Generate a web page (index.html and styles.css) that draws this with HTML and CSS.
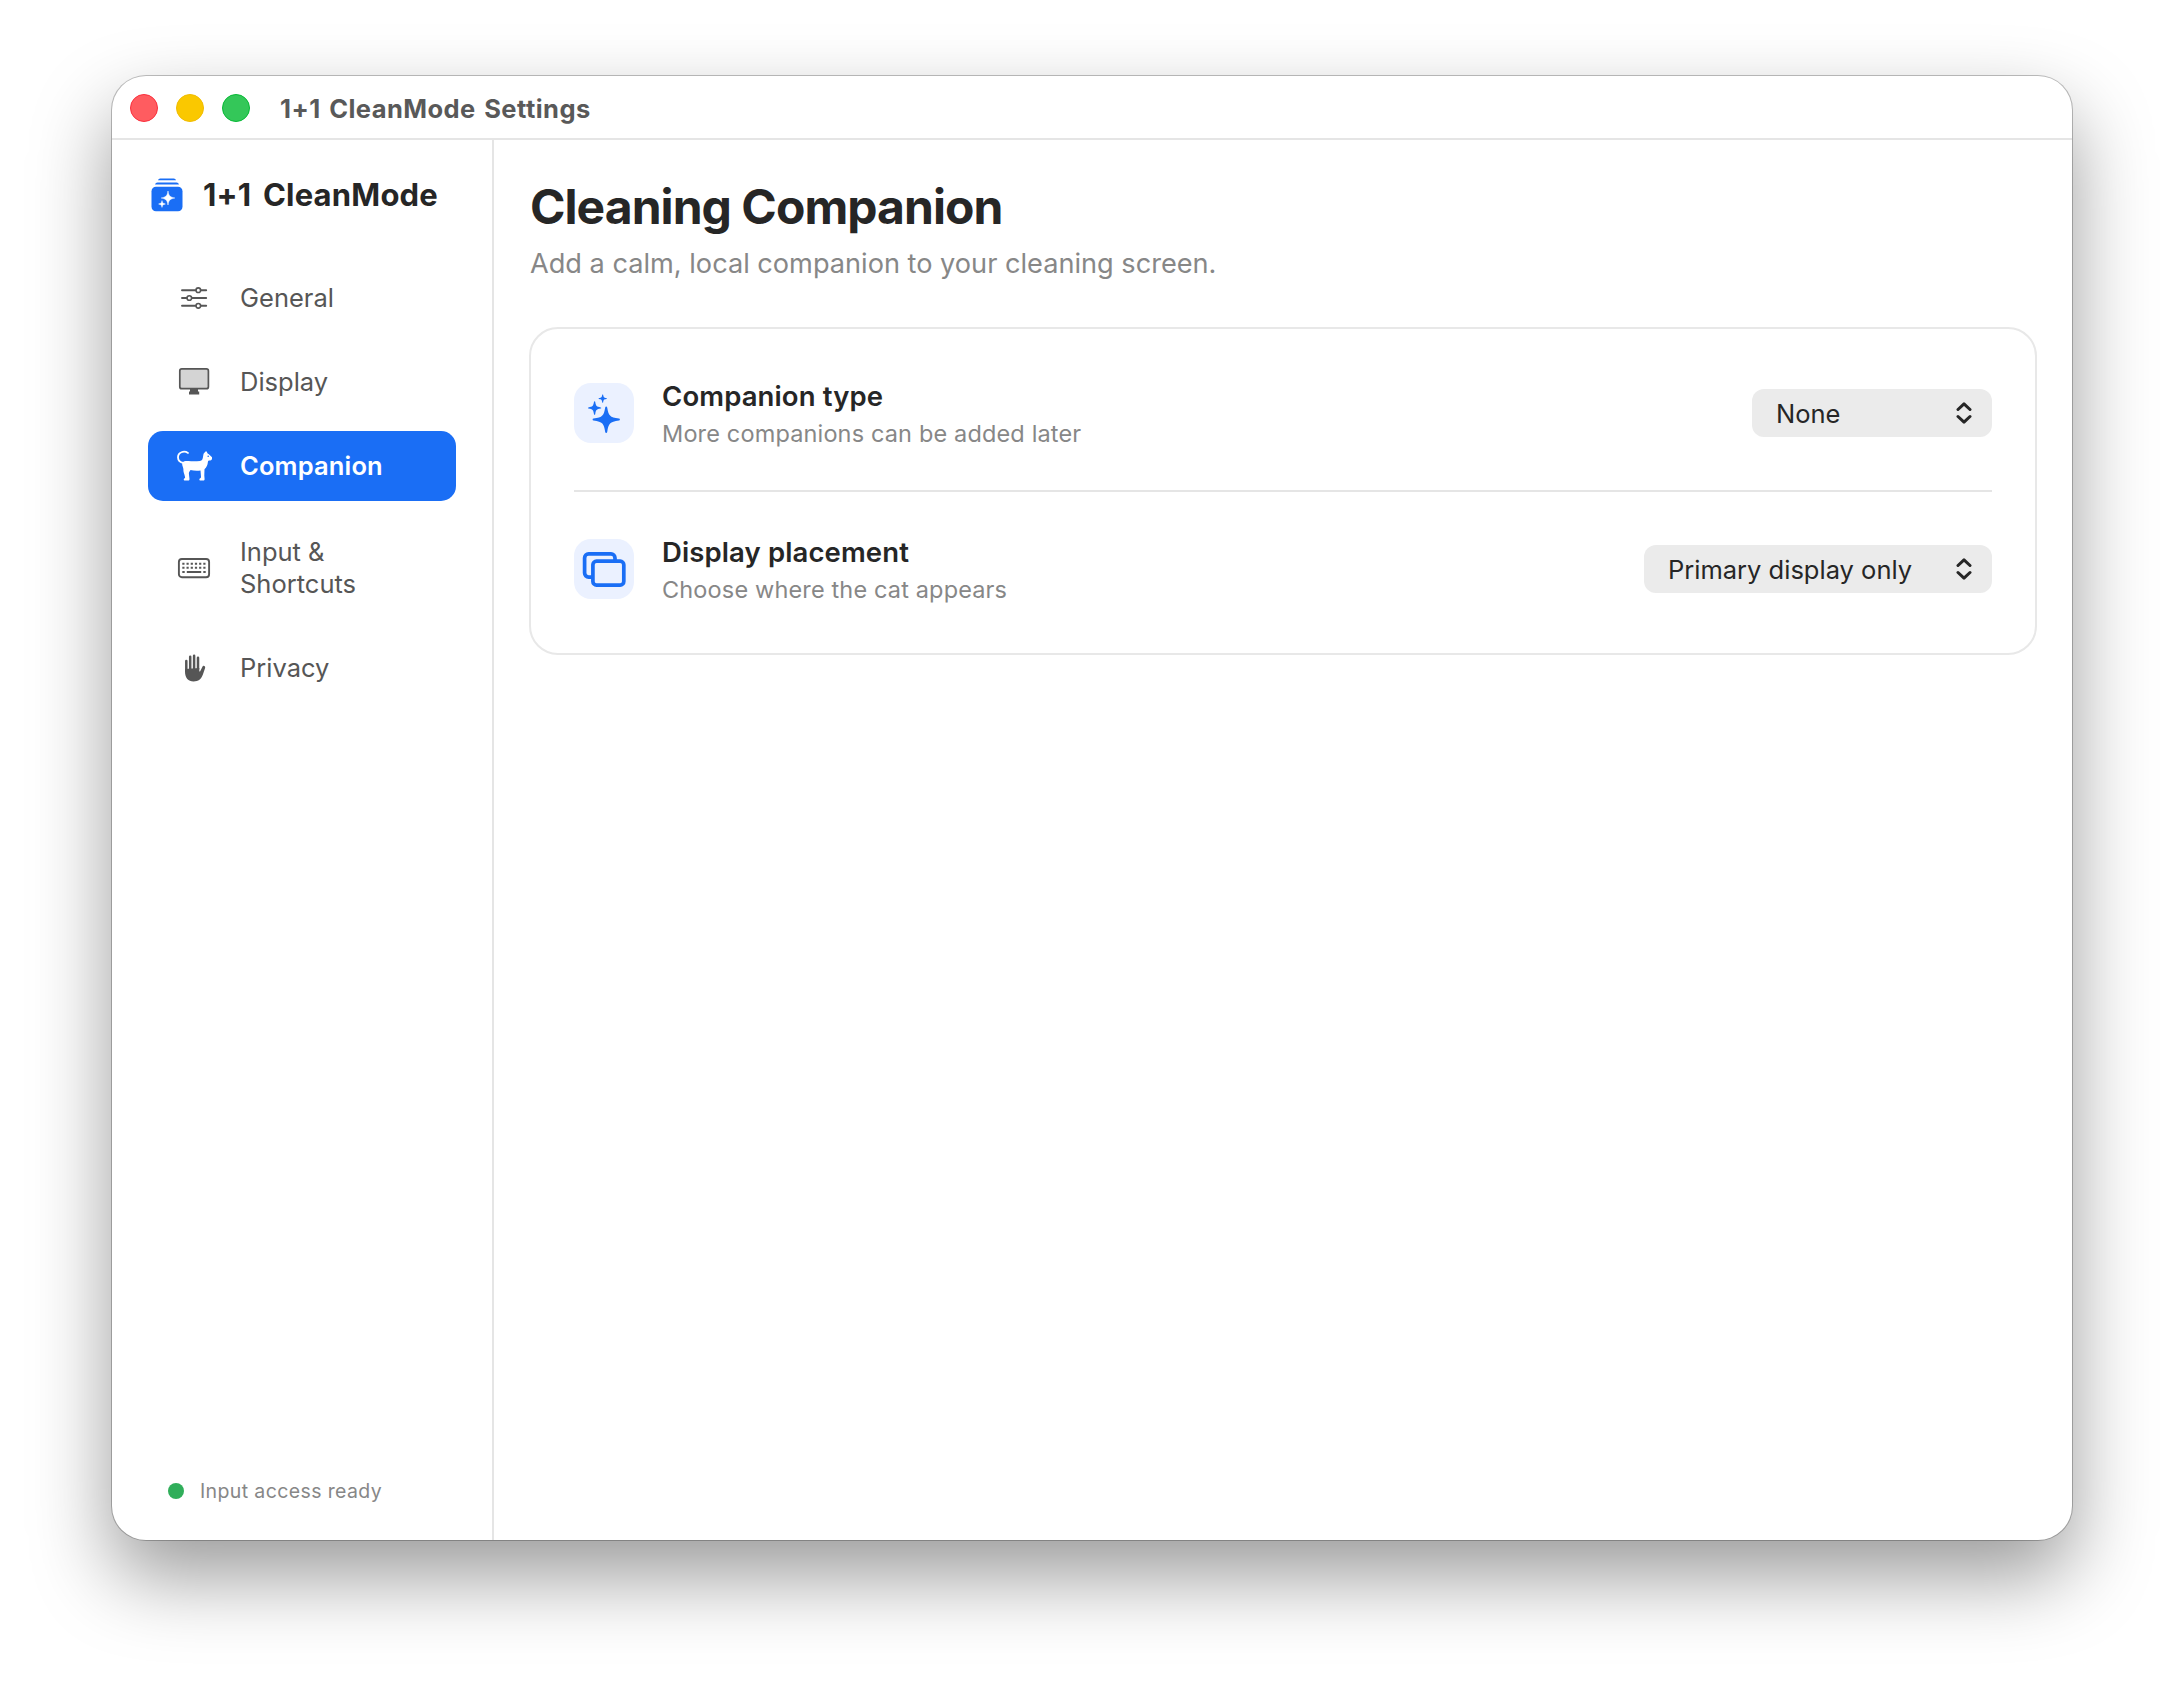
FILE: index.html
```
<!DOCTYPE html>
<html lang="en">
<head>
    <meta charset="UTF-8">
    <title>1+1 CleanMode Settings</title>
    <link rel="stylesheet" href="styles.css">
</head>
<body>
    <div class="window">
        <header class="titlebar">
            <span class="light light-close"></span>
            <span class="light light-minimize"></span>
            <span class="light light-zoom"></span>
            <span class="titlebar-text">1+1 CleanMode Settings</span>
        </header>

        <div class="layout">
            <aside class="sidebar">
                <div class="brand">
                    <svg class="brand-icon" width="32" height="34" viewBox="0 0 32 34">
                        <path d="M7 2.200Q7.400 .4 9.200 .4h13.600Q24.600 .4 25 2.200z" fill="#1a6ef5"/>
                        <path d="M4 6.600Q4.500 4.500 6.500 4.500h19Q27.500 4.500 28 6.600z" fill="#1a6ef5"/>
                        <rect x=".5" y="8.800" width="31" height="24.400" rx="4.500" fill="#1a6ef5"/>
                        <path d="M17 13c.6 4.500 2 6.200 6.800 7-4.800.8-6.200 2.500-6.800 7-.6-4.500-2-6.200-6.800-7 4.800-.8 6.200-2.500 6.800-7z" fill="#fff" stroke="#fff" stroke-width=".5"/>
                        <path d="M11 22.600c.3 2.300 1 3 3.400 3.400-2.400.4-3.100 1.100-3.400 3.400-.3-2.300-1-3-3.400-3.400 2.400-.4 3.100-1.100 3.400-3.400z" fill="#fff" stroke="#fff" stroke-width=".5"/>
                    </svg>
                    <span class="brand-name">1+1 CleanMode</span>
                </div>

                <nav class="nav">
                    <a class="nav-item">
                        <svg class="nav-icon" width="36" height="36" viewBox="0 0 36 36" fill="none" stroke="currentColor" stroke-width="1.900" stroke-linecap="round">
                            <path d="M6 10.200h13.500M25 10.200h5.200M6 18h4.500M16 18h14.200M6 25.800h13.500M25 25.800h5.200"/>
                            <circle cx="22.300" cy="10.200" r="2.300" stroke-width="1.600"/>
                            <circle cx="13.300" cy="18" r="2.300" stroke-width="1.600"/>
                            <circle cx="22.300" cy="25.800" r="2.300" stroke-width="1.600"/>
                        </svg>
                        <span>General</span>
                    </a>
                    <a class="nav-item">
                        <svg class="nav-icon" width="36" height="36" viewBox="0 0 36 36">
                            <rect x="3.800" y="4.900" width="28.600" height="19.800" rx="2" fill="#d4d4d4" stroke="currentColor" stroke-width="1.700"/>
                            <path d="M14 25h8v2.600h1.200v2.900H13v-2.900h1z" fill="currentColor"/>
                        </svg>
                        <span>Display</span>
                    </a>
                    <a class="nav-item active">
                        <svg class="nav-icon" width="36" height="36" viewBox="0 0 36 36">
                            <path d="M12 4.900C8 2.400 1.900 4.100 2 9.500c.1 3.400 2.500 5 5.500 5.500" fill="none" stroke="currentColor" stroke-width="1.800" stroke-linecap="round"/>
                            <path d="M6.500 14.500c1.400-1.400 3.200-1.600 6-1.400 4 .4 8 .3 11.500-.1 1.800-.3 2.600-1.500 2.900-3.500l.5-3c.1-.6.500-1.100 1-1.700l1.200-1.400c.5-.4 1-.2 1.200.3l.8 1.700c1 .3 1.700.9 2.300 1.800l1.900 1.700c.6.600.6 1.200.2 2-.5 1-1.300 1.500-2.600 1.500-1 0-1.400.5-1.500 1.500-.3 3-1.300 5.500-3.400 7.400l-.2 6.200c0 1 .3 2.300.3 3.500 0 1.100-.5 1.500-1.400 1.500h-2.700c-1.500 0-1.500-1.700-.3-2.200.6-.3.800-.7.800-1.500l-.5-6.300c-3.500.6-7 .3-10-.5-.9 1.300-1.700 2.300-1.600 3.800l.4 3.500c.1.600.2 1.400.2 1.900 0 .9-.5 1.300-1.300 1.300H9c-1.600 0-1.600-1.700-.4-2.200.6-.3.500-.8.300-1.800-.5-2.500-1.700-4.500-1.500-7 .1-2.500-2-4-.9-7z" fill="currentColor"/>
                            <circle cx="32.200" cy="8.200" r=".8" fill="#1a6ef5"/>
                        </svg>
                        <span>Companion</span>
                    </a>
                    <a class="nav-item nav-item-tall">
                        <svg class="nav-icon" width="36" height="36" viewBox="0 0 36 36" fill="none" stroke="currentColor">
                            <rect x="2.900" y="9" width="30.200" height="18.200" rx="3" stroke-width="1.900"/>
                            <path d="M6.300 13.800h24M6.300 17.800h24" stroke-width="2" stroke-dasharray="2.200 2"/>
                            <path d="M6.300 22h2.400M27.300 22h2.400M10.800 22h14.400" stroke-width="2"/>
                        </svg>
                        <span>Input &amp;<br>Shortcuts</span>
                    </a>
                    <a class="nav-item">
                        <svg class="nav-icon" width="36" height="36" viewBox="0 0 36 36" fill="none" stroke="currentColor" stroke-linecap="round">
                            <path d="M10.300 11v10M14.200 6.800V19M18.100 5.700V19M22 7.800V19" stroke-width="2.500"/>
                            <path d="M9 19v2.500C9 28 12.300 31.400 17.500 31.400c5 0 7.800-2.400 9.400-6.900l2.200-6.600c.3-1-.1-1.800-.9-2-.8-.2-1.500.1-1.900 1l-2.100 4.300c-.3.500-.9.300-.9-.3V18z" fill="currentColor" stroke="none"/>
                        </svg>
                        <span>Privacy</span>
                    </a>
                </nav>

                <div class="status">
                    <span class="status-dot"></span>
                    <span>Input access ready</span>
                </div>
            </aside>

            <main class="content">
                <h1>Cleaning Companion</h1>
                <p class="subtitle">Add a calm, local companion to your cleaning screen.</p>

                <section class="card">
                    <div class="row">
                        <div class="tile">
                            <svg width="60" height="60" viewBox="0 0 60 60" fill="#1a6ef5">
                                <path d="M32.200 23.500c.5 0 .8.300 1 .9 1.400 8.200 2.400 9.700 11.800 11.200.6.100.9.500.9 1s-.3.900-.9 1c-9.400 1.400-10.400 3-11.800 11.400-.2.600-.5.900-1 .9s-.9-.3-1-.9c-1.400-8.400-2.400-10-11.700-11.400-.6-.1-.9-.5-.9-1s.3-.9.9-1c9.300-1.500 10.300-3 11.700-11.200.1-.6.500-.9 1-.9z"/>
                                <path d="M20.600 18.200c.3 0 .5.200.6.600.7 4.300 1.300 4.900 5.500 5.600.4.100.6.300.6.600s-.2.500-.6.600c-4.200.7-4.800 1.300-5.500 5.600-.1.400-.3.600-.6.600s-.5-.2-.6-.6c-.7-4.300-1.300-4.900-5.500-5.600-.4-.1-.6-.3-.6-.6s.2-.5.600-.6c4.200-.7 4.800-1.300 5.500-5.600.1-.4.300-.6.600-.6z"/>
                                <path d="M28.700 11.400c.2 0 .4.200.4.400.5 2.600.8 2.900 3.300 3.300.3.100.4.200.4.500s-.1.400-.4.500c-2.500.4-2.800.8-3.300 3.300 0 .3-.2.400-.4.400s-.4-.1-.4-.4c-.5-2.500-.8-2.900-3.300-3.300-.3-.1-.4-.2-.4-.5s.1-.4.400-.5c2.500-.4 2.800-.7 3.300-3.300 0-.2.200-.4.400-.4z"/>
                            </svg>
                        </div>
                        <div class="row-text">
                            <div class="row-title">Companion type</div>
                            <div class="row-desc">More companions can be added later</div>
                        </div>
                        <div class="select select-type">
                            <span>None</span>
                            <svg class="chevrons" width="16" height="22" viewBox="0 0 16 22">
                                <path d="M2 7.500l6-5.700 6 5.700M2 14.500l6 5.700 6-5.700"/>
                            </svg>
                        </div>
                    </div>
                    <div class="row">
                        <div class="tile">
                            <svg width="60" height="60" viewBox="0 0 60 60" fill="none" stroke="#1a6ef5" stroke-width="3.700">
                                <path d="M18 38.100h-3.400a4 4 0 0 1-4-4V18.900a4 4 0 0 1 4-4h22.400a4 4 0 0 1 4 4v2.300"/>
                                <rect x="18.900" y="22.200" width="30.900" height="23.900" rx="3.600"/>
                            </svg>
                        </div>
                        <div class="row-text">
                            <div class="row-title">Display placement</div>
                            <div class="row-desc">Choose where the cat appears</div>
                        </div>
                        <div class="select select-placement">
                            <span>Primary display only</span>
                            <svg class="chevrons" width="16" height="22" viewBox="0 0 16 22">
                                <path d="M2 7.500l6-5.700 6 5.700M2 14.500l6 5.700 6-5.700"/>
                            </svg>
                        </div>
                    </div>
                </section>
            </main>
        </div>
    </div>
</body>
</html>
```

FILE: styles.css
```
* {
    box-sizing: border-box;
}
body {
    margin: 0;
    padding: 76px 112px 148px;
    height: 1688px;
    overflow: hidden;
    background: #fff;
    font-family: Inter, "Liberation Sans", sans-serif;
    color: #262626;
}
.window {
    display: flex;
    flex-direction: column;
    width: 1960px;
    height: 1464px;
    border-radius: 34px;
    background: #fff;
    overflow: hidden;
    box-shadow: 0 0 0 1px rgba(0, 0, 0, 0.24), 0 36px 80px rgba(0, 0, 0, 0.4);
}

/* title bar */
.titlebar {
    display: flex;
    align-items: center;
    gap: 18px;
    height: 64px;
    padding: 2px 0 0 18px;
    border-bottom: 2px solid #e5e5e5;
}
.light {
    width: 28px;
    height: 28px;
    border-radius: 50%;
    border: 1px solid;
}
.light-close {
    background: #ff5c60;
    border-color: #fa2f3c;
}
.light-minimize {
    background: #fac800;
    border-color: #f0bc00;
}
.light-zoom {
    background: #34c759;
    border-color: #06b935;
}
.titlebar-text {
    margin-left: 12px;
    font-size: 25.5px;
    font-weight: 700;
    letter-spacing: 0.45px;
    word-spacing: 2px;
    color: #595959;
}

.layout {
    display: flex;
    flex: 1;
}

/* sidebar */
.sidebar {
    display: flex;
    flex-direction: column;
    width: 382px;
    padding: 36px 36px 35px;
    border-right: 2px solid #e5e5e5;
}
.brand {
    display: flex;
    align-items: center;
    gap: 20px;
    height: 37px;
    padding-left: 3px;
}
.brand-name {
    font-size: 31px;
    font-weight: 700;
    letter-spacing: 0.2px;
    word-spacing: 4px;
    white-space: nowrap;
}
.nav {
    display: flex;
    flex-direction: column;
    gap: 14px;
    margin-top: 50px;
}
.nav-item {
    display: flex;
    align-items: center;
    gap: 28px;
    height: 70px;
    padding: 0 28px;
    border-radius: 15px;
    font-size: 25.5px;
    line-height: 32px;
    color: #565656;
}
.nav-item-tall {
    height: 104px;
    padding-top: 2px;
}
.nav-icon {
    flex: none;
}
.nav-item.active {
    background: #1a6ef5;
    color: #fff;
    font-weight: 600;
    letter-spacing: 0.15px;
}
.status {
    display: flex;
    align-items: center;
    gap: 16px;
    height: 28px;
    margin-top: auto;
    padding-left: 20px;
    font-size: 19.5px;
    letter-spacing: 0.38px;
    color: #878787;
}
.status-dot {
    width: 16px;
    height: 16px;
    border-radius: 50%;
    background: #30ae5a;
}

/* content */
.content {
    flex: 1;
    padding: 37px 35px;
}
h1 {
    margin: 0 1px;
    font-size: 48px;
    line-height: 60px;
    font-weight: 700;
    letter-spacing: -0.95px;
}
.subtitle {
    margin: 10px 1px 0;
    font-size: 27.15px;
    line-height: 34px;
    color: #878787;
}
.card {
    margin-top: 46px;
    padding: 0 43px;
    height: 328px;
    border: 2px solid #e8e8e8;
    border-radius: 29px;
}
.row {
    display: flex;
    align-items: center;
    height: 161px;
    padding-top: 7px;
}
.row + .row {
    height: 156px;
    padding-top: 0;
    border-top: 2px solid #e5e5e5;
}
.tile {
    width: 60px;
    height: 60px;
    border-radius: 17px;
    background: #ebf1ff;
}
.tile svg {
    display: block;
}
.row-text {
    flex: 1;
    margin-left: 28px;
    padding-top: 2px;
}
.row-title {
    font-size: 27.5px;
    line-height: 36px;
    font-weight: 600;
    letter-spacing: 0.12px;
}
.row-desc {
    margin-top: 4px;
    font-size: 23.5px;
    line-height: 32px;
    letter-spacing: 0.15px;
    color: #878787;
}
.select {
    display: flex;
    align-items: center;
    justify-content: space-between;
    height: 48px;
    padding: 0 20px 0 24px;
    border-radius: 12px;
    background: #ebebeb;
    font-size: 25.5px;
}
.select-type {
    width: 240px;
}
.select-placement {
    width: 348px;
}
.chevrons {
    fill: none;
    stroke: #262626;
    stroke-width: 3;
    stroke-linecap: round;
    stroke-linejoin: round;
}
```
